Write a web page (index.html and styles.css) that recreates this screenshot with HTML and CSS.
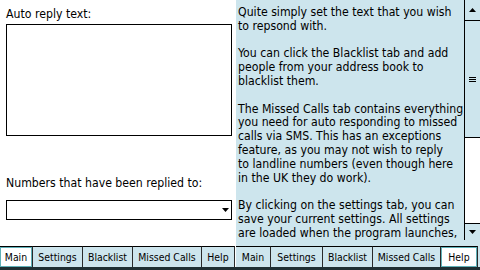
FILE: index.html
```html
<!DOCTYPE html>
<html lang="en">
<head>
<meta charset="utf-8">
<title>Auto Reply</title>
<link rel="stylesheet" href="styles.css">
</head>
<body>
<div class="device">
  <section class="screen screen-main">
    <div class="main-body">
      <div class="field-label">Auto reply text:</div>
      <div class="textbox"></div>
      <div class="field-label numbers-label">Numbers that have been replied to:</div>
      <div class="combo">
        <svg class="arrow" width="7" height="4" viewBox="0 0 7 4"><path d="M0 0h7L3.5 4z"/></svg>
      </div>
    </div>
    <nav class="tabbar">
      <span class="tab tab-main active">Main</span>
      <span class="tab tab-settings">Settings</span>
      <span class="tab tab-blacklist">Blacklist</span>
      <span class="tab tab-missed">Missed Calls</span>
      <span class="tab tab-help">Help</span>
    </nav>
  </section>
  <section class="screen screen-help">
    <div class="help-body">
      <div class="help-text">
        <p>Quite simply set the text that you wish<br>to repsond with.</p>
        <p>You can click the Blacklist tab and add<br>people from your address book to<br>blacklist them.</p>
        <p>The Missed Calls tab contains everything<br>you need for auto responding to missed<br>calls via SMS. This has an exceptions<br>feature, as you may not wish to reply<br>to landline numbers (even though here<br>in the UK they do work).</p>
        <p>By clicking on the settings tab, you can<br>save your current settings. All settings<br>are loaded when the program launches,</p>
      </div>
      <div class="scrollbar">
        <div class="sb-btn sb-up"><svg width="7" height="4" viewBox="0 0 7 4"><path d="M0 4h7L3.5 0z"/></svg></div>
        <div class="sb-thumb"><span class="grip"></span><span class="grip"></span><span class="grip"></span></div>
        <div class="sb-track"></div>
        <div class="sb-btn sb-down"><svg width="7" height="4" viewBox="0 0 7 4"><path d="M0 0h7L3.5 4z"/></svg></div>
      </div>
    </div>
    <nav class="tabbar tabbar-help">
      <span class="tab tab-main">Main</span>
      <span class="tab tab-settings">Settings</span>
      <span class="tab tab-blacklist">Blacklist</span>
      <span class="tab tab-missed">Missed Calls</span>
      <span class="tab tab-help active">Help</span>
    </nav>
  </section>
</div>
</body>
</html>
```

FILE: styles.css
```css
* { box-sizing: border-box; }

html, body {
  margin: 0;
  padding: 0;
  background: #ffffff;
}

body {
  font-family: "DejaVu Sans Condensed", "DejaVu Sans", sans-serif;
  font-stretch: condensed;
  color: #000;
}

.device {
  display: flex;
  width: 480px;
  height: 270px;
  overflow: hidden;
}

.screen {
  display: flex;
  flex-direction: column;
  height: 270px;
}

.screen-main {
  width: 236px;
  background: #ffffff;
}

.screen-help {
  width: 244px;
}

/* ---- main tab ---- */
.main-body {
  flex: 1;
  padding: 7px 0 0 6px;
}

.field-label {
  font-size: 12.2px;
  line-height: 14px;
  height: 14px;
  white-space: nowrap;
}

.textbox {
  margin-top: 3px;
  width: 226px;
  height: 112px;
  border: 1px solid #000;
  background: #fff;
}

.numbers-label {
  margin-top: 40px;
}

.combo {
  margin-top: 10px;
  width: 226px;
  height: 20px;
  border: 1px solid #000;
  display: flex;
  align-items: center;
  justify-content: flex-end;
  padding-right: 2px;
}

.combo .arrow,
.sb-btn svg {
  display: block;
  fill: #000;
}

/* ---- tab bar ---- */
.tabbar {
  height: 30px;
  padding-top: 6px;
  display: flex;
  border-bottom: 3px solid #1f2f33;
  background: #ffffff;
}

.tabbar-help {
  background: #cde5ed;
}

.tab {
  height: 21px;
  line-height: 20px;
  text-align: center;
  font-size: 10.4px;
  background: #cde5ed;
  border-top: 1px solid #000;
  border-right: 1px solid #2a2a2a;
  white-space: nowrap;
}

.tab-main { width: 33px; }
.tab-settings { width: 50px; }
.tab-blacklist { width: 50px; }
.tab-missed { width: 69px; }
.tab-help { width: 33px; }

.tabbar-help .tab-main { width: 35px; }
.tabbar-help .tab-settings { width: 52px; }
.tabbar-help .tab-blacklist { width: 50px; }
.tabbar-help .tab-missed { width: 68px; }
.tabbar-help .tab-help { width: 37px; }

.tab.active {
  background: #fff;
  box-shadow: inset 0 0 0 1px #5fb1b8;
}

/* ---- help tab ---- */
.help-body {
  height: 240px;
  display: flex;
  background: #cde5ed;
}

.help-text {
  flex: 1;
  overflow: hidden;
  padding: 6px 0 0 2px;
  font-size: 12.2px;
  line-height: 13.8px;
  white-space: nowrap;
}

.help-text p {
  margin: 0 0 13.8px;
}

.scrollbar {
  width: 16px;
  border-left: 1px solid #000;
  display: flex;
  flex-direction: column;
}

.sb-btn {
  display: flex;
  align-items: center;
  justify-content: center;
  background: #cde5ed;
}

.sb-up {
  height: 21px;
  border-bottom: 1px solid #000;
}

.sb-thumb {
  height: 117px;
  border-bottom: 1px solid #000;
  background: #cde5ed;
  display: flex;
  flex-direction: column;
  align-items: center;
  justify-content: center;
  gap: 1px;
}

.grip {
  display: block;
  width: 7px;
  height: 1px;
  background: #000;
}

.sb-track {
  flex: 1;
  background: #fff;
}

.sb-down {
  height: 17px;
  border-top: 1px solid #000;
}
```
